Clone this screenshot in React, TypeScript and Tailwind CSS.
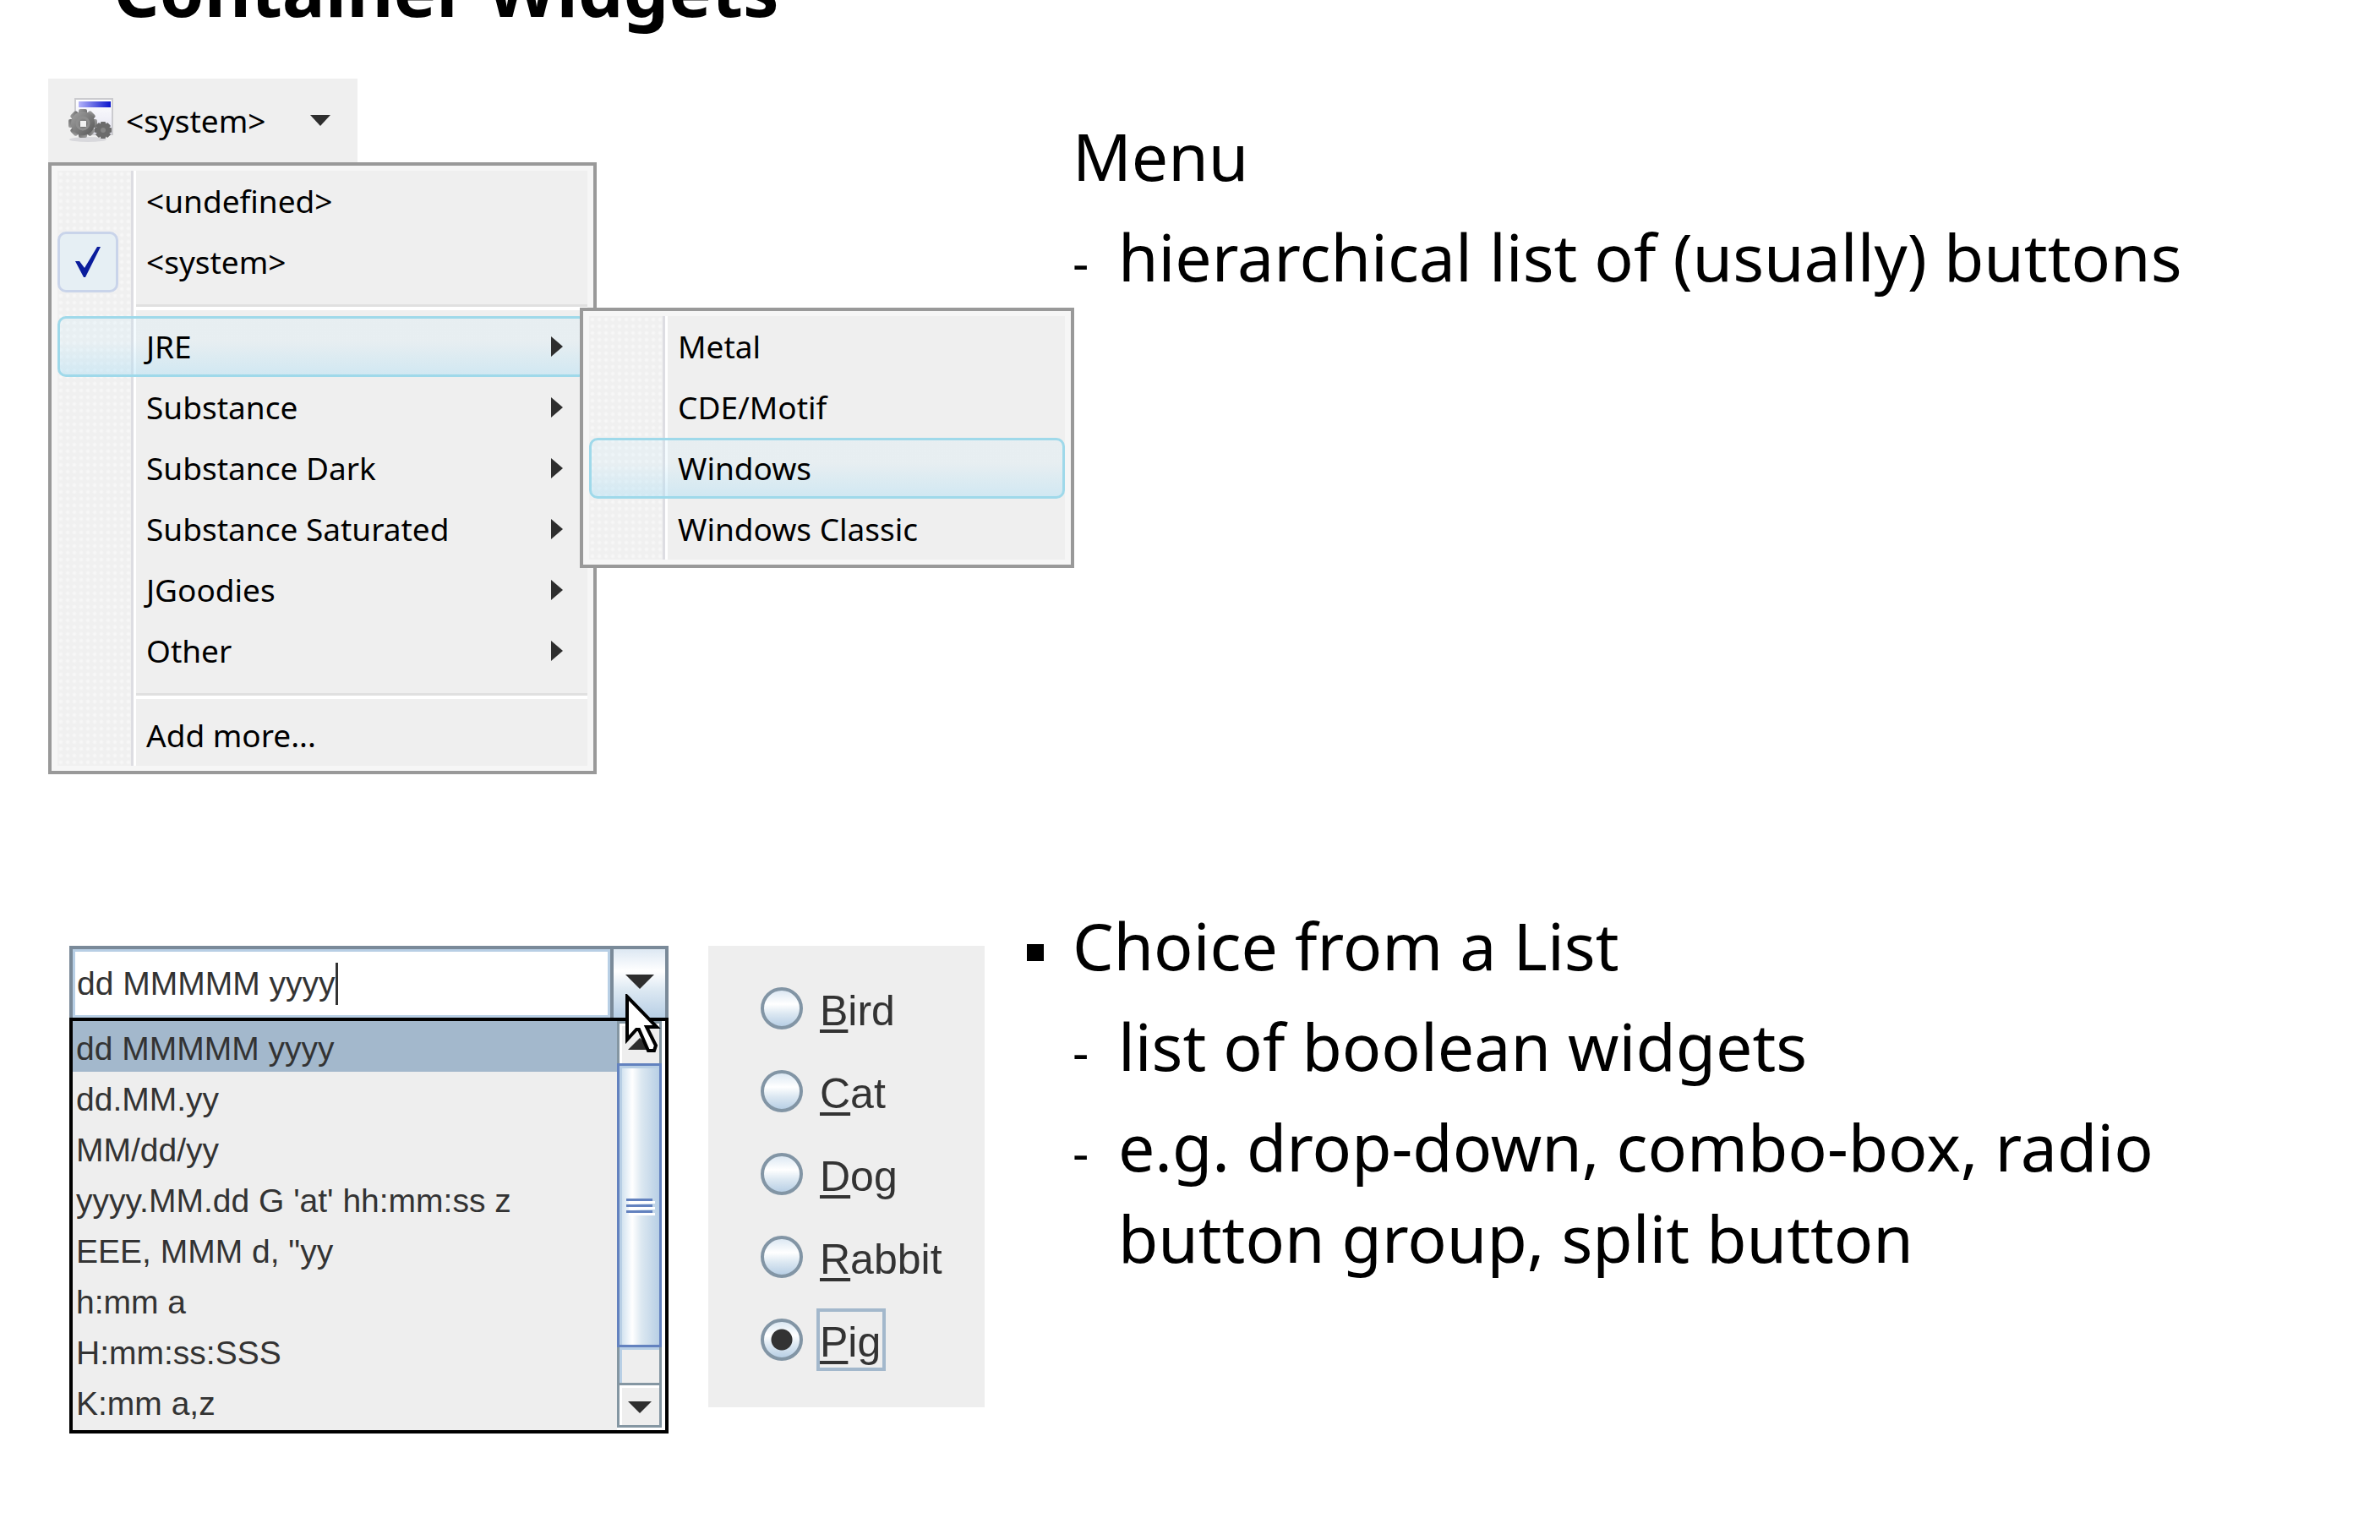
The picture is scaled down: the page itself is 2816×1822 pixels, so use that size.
import React, { useState } from "react";

const SANS = "font-['Noto_Sans','Open_Sans',sans-serif]";
const ARIAL = "font-['Liberation_Sans',Arial,sans-serif]";

const THEMES = ["JRE", "Substance", "Substance Dark", "Substance Saturated", "JGoodies", "Other"];
const JRE_THEMES = ["Metal", "CDE/Motif", "Windows", "Windows Classic"];
const FORMATS = [
  "dd MMMMM yyyy",
  "dd.MM.yy",
  "MM/dd/yy",
  "yyyy.MM.dd G 'at' hh:mm:ss z",
  "EEE, MMM d, \"yy",
  "h:mm a",
  "H:mm:ss:SSS",
  "K:mm a,z",
];
const PETS = ["Bird", "Cat", "Dog", "Rabbit", "Pig"];

function SystemIcon() {
  const teeth = [0, 45, 90, 135, 180, 225, 270, 315];
  return (
    <svg width="54" height="54" viewBox="0 0 54 54" aria-hidden="true" className="shrink-0">
      <defs>
        <linearGradient id="bar" x1="0" x2="1" y1="0" y2="0">
          <stop offset="0" stopColor="#b4b4fa" />
          <stop offset="1" stopColor="#0a14cc" />
        </linearGradient>
        <linearGradient id="pane" x1="0" x2="0" y1="0" y2="1">
          <stop offset="0" stopColor="#ffffff" />
          <stop offset="1" stopColor="#e4e4f2" />
        </linearGradient>
        <linearGradient id="metal" x1="0" x2="1" y1="0" y2="1">
          <stop offset="0" stopColor="#a2a2a2" />
          <stop offset="1" stopColor="#585858" />
        </linearGradient>
      </defs>
      <ellipse cx="23" cy="49" rx="22" ry="3" fill="#d8d8dc" />
      <rect x="8" y="1" width="44" height="42" fill="url(#pane)" stroke="#cbcbcf" strokeWidth="2" />
      <rect x="12" y="4" width="38" height="7" fill="url(#bar)" />
      <g fill="url(#metal)">
        {teeth.map((a) => (
          <rect key={a} x="12" y="13" width="10" height="8" rx="2" transform={`rotate(${a} 17 30)`} />
        ))}
        <circle cx="17" cy="30" r="14" />
      </g>
      <circle cx="17" cy="30" r="7" fill="none" stroke="#8e8e8e" strokeWidth="3" />
      <rect x="14" y="27" width="7" height="7" fill="#f2f2f2" />
      <g fill="#6c6c6c">
        {teeth.map((a) => (
          <rect key={a} x="38" y="28" width="6" height="6" rx="1" transform={`rotate(${a} 41 38)`} />
        ))}
        <circle cx="41" cy="38" r="8" />
      </g>
      <circle cx="41" cy="38" r="3" fill="#868686" />
    </svg>
  );
}

function Triangle({ dir, w, h }: { dir: "down" | "up" | "right"; w: number; h: number }) {
  const points =
    dir === "down" ? `0,0 ${w},0 ${w / 2},${h}` : dir === "up" ? `0,${h} ${w},${h} ${w / 2},0` : `0,0 ${w},${h / 2} 0,${h}`;
  return (
    <svg width={w} height={h} viewBox={`0 0 ${w} ${h}`} aria-hidden="true" className="shrink-0">
      <polygon points={points} fill="#2e2e2e" />
    </svg>
  );
}

function MenuPanel({ children, label }: { children: React.ReactNode; label: string }) {
  return (
    <div role="menu" aria-label={label} className="border-4 border-[#999999] bg-[#f6f6f6] px-[7px] py-[6px]">
      <div className="bg-[linear-gradient(to_right,transparent_87px,#dddde2_87px,#dddde2_90px,#ffffff_90px,#ffffff_93px,#efefef_93px),radial-gradient(#f7f7f7_1px,#f0f0f0_3px)] bg-[size:auto,8px_8px]">
        {children}
      </div>
    </div>
  );
}

function MenuRow({ label, active, checked, arrow }: { label: string; active?: boolean; checked?: boolean; arrow?: boolean }) {
  return (
    <button
      type="button"
      role="menuitem"
      className={
        "flex h-[72px] w-full items-center rounded-[10px] border-[3px] text-left text-[37px] leading-[48px] text-black " +
        (active
          ? "border-[#9fd9ea] bg-[linear-gradient(to_bottom,rgba(200,235,250,0.2)_40%,rgba(180,225,245,0.5))]"
          : "border-transparent")
      }
    >
      <span className="-ml-[3px] flex w-[105px] shrink-0">
        {checked && (
          <span className="flex size-[72px] items-center justify-center rounded-[10px] border-[3px] border-[#c9d4ea] bg-[#e6eff4]">
            <svg width="32" height="38" viewBox="0 0 32 38" aria-hidden="true">
              <path d="M1 18H6L12 26L27 1H31L13 37H11Z" fill="#0a1c9c" />
            </svg>
          </span>
        )}
      </span>
      <span className="flex-1 whitespace-nowrap">{label}</span>
      {arrow && (
        <span className="mr-[26px] flex">
          <Triangle dir="right" w={14} h={24} />
        </span>
      )}
    </button>
  );
}

function MenuSeparator() {
  return (
    <div role="separator" className="flex h-[28px] flex-col pt-[14px] pl-[93px]">
      <div className="h-[3px] bg-[#e0e0e0]" />
      <div className="h-[4px] bg-white" />
    </div>
  );
}

function MenuWidget() {
  return (
    <div className={"relative w-[649px] " + SANS}>
      <button type="button" className="flex h-[99px] w-[366px] items-center bg-[#efefef] pl-[24px] text-[37px] leading-[48px] text-black">
        <SystemIcon />
        <span className="ml-[14px] flex-1 text-left">&lt;system&gt;</span>
        <span className="mr-[32px] flex">
          <Triangle dir="down" w={24} h={13} />
        </span>
      </button>
      <MenuPanel label="Look and feel">
        <MenuRow label="<undefined>" />
        <MenuRow label="<system>" checked />
        <MenuSeparator />
        {THEMES.map((t) => (
          <MenuRow key={t} label={t} active={t === "JRE"} arrow />
        ))}
        <MenuSeparator />
        <MenuRow label="Add more..." />
      </MenuPanel>
      <div className="absolute top-[271px] left-[629px] w-[585px]">
        <MenuPanel label="JRE">
          {JRE_THEMES.map((t) => (
            <MenuRow key={t} label={t} active={t === "Windows"} />
          ))}
        </MenuPanel>
      </div>
    </div>
  );
}

function PointerCursor() {
  return (
    <svg width="44" height="74" viewBox="0 0 44 74" aria-hidden="true" className="absolute top-[57px] left-[657px]">
      <path d="M3 3V54L14 42L17 42L28 67H35L37 61L26 39H38Z" fill="#ffffff" stroke="#000000" strokeWidth="4" strokeLinejoin="miter" />
    </svg>
  );
}

function ComboBox() {
  const [value, setValue] = useState(FORMATS[0]);
  return (
    <div className={"relative w-[709px] shrink-0 text-[39px] text-[#333333] " + ARIAL}>
      <div className="flex h-[85px] border-4 border-b-0 border-[#7a8a99]">
        <div className="flex flex-1 items-center border-[3px] border-[#b8cfe5] bg-white pl-[2px]">
          <input
            aria-label="Date format"
            value={value}
            onChange={(e) => setValue(e.target.value)}
            className="field-sizing-content bg-transparent p-0 leading-[48px] outline-none"
          />
          <span className="h-[50px] w-[3px] bg-[#333333]" />
        </div>
        <button
          type="button"
          aria-label="Show formats"
          className="flex w-[65px] justify-center border-l-4 border-[#7a8a99] bg-[linear-gradient(to_bottom,#dde8f3,#ffffff_32%,#dce8f2_60%,#b8cfe5)] pt-[30px]"
        >
          <Triangle dir="down" w={34} h={17} />
        </button>
      </div>
      <div className="flex border-4 border-black bg-[#eeeeee]">
        <ul role="listbox" aria-label="Formats" className="flex-1 pb-[4px]">
          {FORMATS.map((f, i) => (
            <li
              key={f}
              role="option"
              aria-selected={i === 0}
              className={"h-[60px] pl-[4px] leading-[66px] whitespace-nowrap " + (i === 0 ? "bg-[#a3b8cc]" : "")}
            >
              {f}
            </li>
          ))}
        </ul>
        <div className="flex w-[57px] flex-col bg-white pr-[4px]">
          <button
            type="button"
            aria-label="Scroll up"
            className="flex h-[50px] items-end justify-center border-x-[3px] border-t-[3px] border-[#8496a2] bg-[#eeeeee] pb-[16px] shadow-[inset_3px_3px_0_#ffffff]"
          >
            <Triangle dir="up" w={28} h={14} />
          </button>
          <div className="flex flex-1 flex-col border-x-[3px] border-[#8496a2] bg-[#eeeeee] shadow-[inset_3px_0_0_#b8cfe5]">
            <div className="-mx-[3px] flex h-[336px] flex-col items-center justify-center gap-[4px] border-[3px] border-[#6382bf] bg-[linear-gradient(to_right,#c8dcec,#ffffff_32%,#dce8f1_55%,#b8cfe5)] shadow-[inset_3px_3px_0_#b8cfe5]">
              <span className="h-[3px] w-[31px] bg-[#6382bf] shadow-[3px_3px_0_#ffffff]" />
              <span className="h-[3px] w-[31px] bg-[#6382bf] shadow-[3px_3px_0_#ffffff]" />
              <span className="h-[3px] w-[31px] bg-[#6382bf] shadow-[3px_3px_0_#ffffff]" />
            </div>
            <div className="h-[3px] bg-[#b8cfe5]" />
          </div>
          <button
            type="button"
            aria-label="Scroll down"
            className="mb-[3px] flex h-[53px] items-center justify-center border-[3px] border-[#8496a2] bg-[#eeeeee] pt-[4px] shadow-[inset_3px_3px_0_#ffffff]"
          >
            <Triangle dir="down" w={28} h={14} />
          </button>
        </div>
      </div>
      <PointerCursor />
    </div>
  );
}

function RadioGroup() {
  const [pet, setPet] = useState("Pig");
  return (
    <fieldset
      aria-label="Pet"
      className={"h-[546px] w-[327px] shrink-0 bg-[#eeeeee] pt-[25px] pl-[62px] text-[50px] text-[#333333] " + ARIAL}
    >
      {PETS.map((p) => (
        <label key={p} className="flex h-[98px] items-center gap-[16px]">
          <input
            type="radio"
            name="pet"
            checked={pet === p}
            onChange={() => setPet(p)}
            className="size-[50px] shrink-0 appearance-none rounded-full border-4 border-[#8295a5] bg-[linear-gradient(to_bottom,#dce8f3,#ffffff_38%,#dce8f2_65%,#b8cfe5)] checked:bg-[radial-gradient(circle,#333333_12px,transparent_13px),linear-gradient(to_bottom,#dce8f3,#ffffff_38%,#dce8f2_65%,#b8cfe5)]"
          />
          <span className={"flex h-[74px] items-center border-4 pt-[6px] pr-[2px] " + (pet === p ? "border-[#a3b8cc]" : "border-transparent")}>
            <span className="leading-[60px]">
              <span className="underline decoration-4 underline-offset-[5px] [text-decoration-skip-ink:none]">{p[0]}</span>
              {p.slice(1)}
            </span>
          </span>
        </label>
      ))}
    </fieldset>
  );
}

function SubPoint({ children }: { children: React.ReactNode }) {
  return (
    <li className="mt-[11px] flex items-baseline">
      <span className="w-[54px] shrink-0 text-[60px] leading-none">-</span>
      <span>{children}</span>
    </li>
  );
}

export default function App() {
  return (
    <main className={"min-h-screen w-full overflow-hidden bg-white text-black " + SANS}>
      <header className="flex h-[93px] items-start pl-[134px]">
        <h1 className="-mt-[70px] text-[85px] leading-[114px] font-bold whitespace-nowrap">Container Widgets</h1>
      </header>

      <section className="grid grid-cols-[43%_1fr]">
        <div className="pl-[57px]">
          <MenuWidget />
        </div>
        <div className="pt-[38px] pr-16 pl-[58px] text-[77px] leading-[108px]">
          <h2>Menu</h2>
          <ul>
            <SubPoint>hierarchical list of (usually) buttons</SubPoint>
          </ul>
        </div>
      </section>

      <section className="mt-[149px] grid grid-cols-[43%_1fr]">
        <div className="flex items-start gap-[47px] pt-[54px] pl-[82px]">
          <ComboBox />
          <RadioGroup />
        </div>
        <div className="pr-16 text-[77px] leading-[108px]">
          <h2 className="flex items-start">
            <span className="mt-[52px] mr-[34px] ml-[4px] size-[20px] shrink-0 bg-black" />
            Choice from a List
          </h2>
          <ul className="pl-[58px]">
            <SubPoint>list of boolean widgets</SubPoint>
            <SubPoint>e.g. drop-down, combo-box, radio button group, split button</SubPoint>
          </ul>
        </div>
      </section>
    </main>
  );
}
